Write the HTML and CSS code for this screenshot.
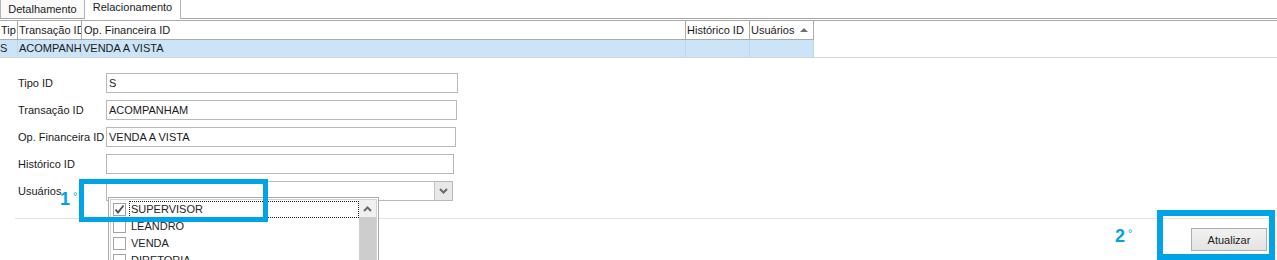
FILE: index.html
```html
<!DOCTYPE html>
<html>
<head>
    <title>Relacionamento</title>
    <link rel="stylesheet" href="styles.css">
</head>
<body>
    <div class="tabs">
        <div class="tab">Detalhamento</div>
        <div class="tab active">Relacionamento</div>
    </div>

    <div class="grid">
        <div class="row head">
            <div class="cell">Tip</div>
            <div class="cell">Transação ID</div>
            <div class="cell wide">Op. Financeira ID</div>
            <div class="cell">Histórico ID</div>
            <div class="cell">Usuários <span class="sort"></span></div>
        </div>
        <div class="row selected">
            <div class="cell">S</div>
            <div class="cell">ACOMPANHAM</div>
            <div class="cell">VENDA A VISTA</div>
            <div class="cell"></div>
            <div class="cell"></div>
        </div>
    </div>

    <div class="form">
        <div class="field">
            <label>Tipo ID</label>
            <div class="input w1">S</div>
        </div>
        <div class="field">
            <label>Transação ID</label>
            <div class="input w2">ACOMPANHAM</div>
        </div>
        <div class="field">
            <label>Op. Financeira ID</label>
            <div class="input w3">VENDA A VISTA</div>
        </div>
        <div class="field">
            <label>Histórico ID</label>
            <div class="input w4"></div>
        </div>
        <div class="field">
            <label>Usuários</label>
            <div class="combo">
                <div class="drop-button">
                    <svg width="9" height="6" viewBox="0 0 9 6"><polyline points="1,1 4.5,4.5 8,1" fill="none" stroke="#6a6a6a" stroke-width="2"/></svg>
                </div>
                <div class="list">
                    <div class="list-inner">
                        <div class="items">
                            <div class="item">
                                <span class="check checked">
                                    <svg width="11" height="11" viewBox="0 0 11 11"><polyline points="1.5,5.5 4,8.5 9.5,1.5" fill="none" stroke="#4a4a4a" stroke-width="1.8"/></svg>
                                </span>
                                <span class="item-text focus">SUPERVISOR</span>
                            </div>
                            <div class="item">
                                <span class="check"></span>
                                <span class="item-text">LEANDRO</span>
                            </div>
                            <div class="item">
                                <span class="check"></span>
                                <span class="item-text">VENDA</span>
                            </div>
                            <div class="item">
                                <span class="check"></span>
                                <span class="item-text">DIRETORIA</span>
                            </div>
                        </div>
                        <div class="scrollbar">
                            <div class="scroll-up">
                                <svg width="9" height="6" viewBox="0 0 9 6"><polyline points="1,5 4.5,1.5 8,5" fill="none" stroke="#6a6a6a" stroke-width="2"/></svg>
                            </div>
                            <div class="scroll-thumb"></div>
                        </div>
                    </div>
                </div>
            </div>
        </div>
    </div>

    <div class="separator"></div>

    <div class="actions">
        <button class="button">Atualizar</button>
    </div>

    <!-- callouts drawn over the screen -->
    <div class="mark mark1"></div>
    <div class="mark mark2"></div>
    <div class="step step1">1<span class="deg">°</span></div>
    <div class="step step2">2<span class="deg">°</span></div>
</body>
</html>
```

FILE: styles.css
```css
* {
    box-sizing: border-box;
}

html {
    overflow:hidden;
}

body {
    margin:0;
    background:#fff;
    color:#1a1a1a;
    font-family:"Liberation Sans", Arial, sans-serif;
    font-size:11px;
    overflow:hidden;
    position:relative;
    height:260px;
}

/* tabs */
.tabs {
    display:flex;
    align-items:flex-start;
    height:19px;
    border-bottom:1px solid #a6a6a6;
}

.tab {
    height:18px;
    line-height:18px;
    width:85px;
    text-align:center;
    border-left:1px solid #b4b4b4;
    border-right:1px solid #b4b4b4;
    background:#fafafa;
}

.tab.active {
    width:96px;
    height:19px;
    line-height:14px;
    border-left:none;
    background:#fff;
}

/* grid */
.grid {
    margin-top:1px;
    border-top:1px solid #ababab;
    border-bottom:1px solid #d6d6d6;
}

.row {
    display:grid;
    grid-template-columns:18px 64px 604px 64px 64px;
    width:814px;
}

.cell {
    padding-left:1px;
    white-space:nowrap;
    overflow:hidden;
    border-right:1px solid #ababab;
}

.head {
    height:19px;
    line-height:18px;
    border-bottom:1px solid #ababab;
}

.head .wide {
    padding-left:2px;
}

.sort {
    display:inline-block;
    margin-left:3px;
    vertical-align:middle;
    border-left:4px solid transparent;
    border-right:4px solid transparent;
    border-bottom:4px solid #707070;
    position:relative;
    top:-1px;
}

.selected {
    height:17px;
    line-height:17px;
    background:#cce4f7;
}

.selected .cell {
    border-right-color:#bed6ea;
}

.selected .cell:first-child {
    padding-left:0;
}

/* form */
.form {
    display:flex;
    flex-direction:column;
    gap:7px;
    padding:15px 0 0 18px;
}

.field {
    display:flex;
    align-items:center;
    height:20px;
}

.field label {
    width:88px;
}

.input, .combo {
    height:20px;
    line-height:18px;
    padding-left:2px;
    border:1px solid #b9b9b9;
    background:#fff;
}

.w1 { width:352px; }
.w2 { width:351px; }
.w3 { width:350px; }
.w4 { width:348px; }

.combo {
    width:347px;
    position:relative;
    display:flex;
    justify-content:flex-end;
    padding:0;
}

.drop-button {
    width:18px;
    height:18px;
    background:#e8e8e8;
    border-left:1px solid #c4c4c4;
    display:flex;
    align-items:center;
    justify-content:center;
}

/* dropdown list */
.list {
    position:absolute;
    left:1px;
    top:15px;
    width:271px;
    height:64px;
    border:1px solid #a8a8a8;
    border-bottom:none;
    padding:1px 1px 0 1px;
    background:#fff;
    z-index:5;
}

.list-inner {
    display:flex;
    height:100%;
    border:1px solid #d2d2d2;
    border-bottom:none;
}

.items {
    flex:1;
    padding-top:1px;
    overflow:hidden;
}

.item {
    display:flex;
    align-items:center;
    height:17px;
    color:#222;
}

.check {
    width:13px;
    height:13px;
    margin:0 3px 0 2px;
    border:1px solid #a3a3a3;
    background:#fff;
    display:flex;
    align-items:center;
    justify-content:center;
}

.item-text {
    flex:1;
    height:17px;
    line-height:15px;
    padding-left:1px;
    border:1px solid transparent;
}

.item-text.focus {
    border:1px dotted #222;
}

.scrollbar {
    width:17px;
    display:flex;
    flex-direction:column;
}

.scroll-up {
    height:17px;
    background:#f0f0f0;
    display:flex;
    align-items:center;
    justify-content:center;
}

.scroll-thumb {
    flex:1;
    background:#cdcdcd;
}

/* bottom */
.separator {
    height:1px;
    margin:17px 2px 0 15px;
    background:#e3e3e3;
}

.actions {
    display:flex;
    justify-content:flex-end;
    padding:9px 10px 0 0;
}

.button {
    width:76px;
    height:23px;
    font-family:"Liberation Sans", Arial, sans-serif;
    font-size:11px;
    color:#1a1a1a;
    border:1px solid #adadad;
    background:linear-gradient(#f2f2f2, #e3e3e3);
    padding:0;
}

/* callouts */
.mark {
    position:absolute;
    border:5px solid #00a2e8;
    z-index:10;
}

.mark1 {
    left:79px;
    top:179px;
    width:189px;
    height:43px;
}

.mark2 {
    left:1157px;
    top:210px;
    width:118px;
    height:50px;
    border-width:6px;
}

.step {
    position:absolute;
    color:#00a2e8;
    font-family:"Liberation Sans", Arial, sans-serif;
    font-weight:bold;
    font-size:18px;
    line-height:18px;
    z-index:10;
}

.deg {
    font-weight:normal;
    font-size:11px;
    vertical-align:top;
    position:relative;
    top:-3px;
    margin-left:3px;
}

.step1 {
    left:60px;
    top:190px;
}

.step2 {
    left:1115px;
    top:227px;
}
```
